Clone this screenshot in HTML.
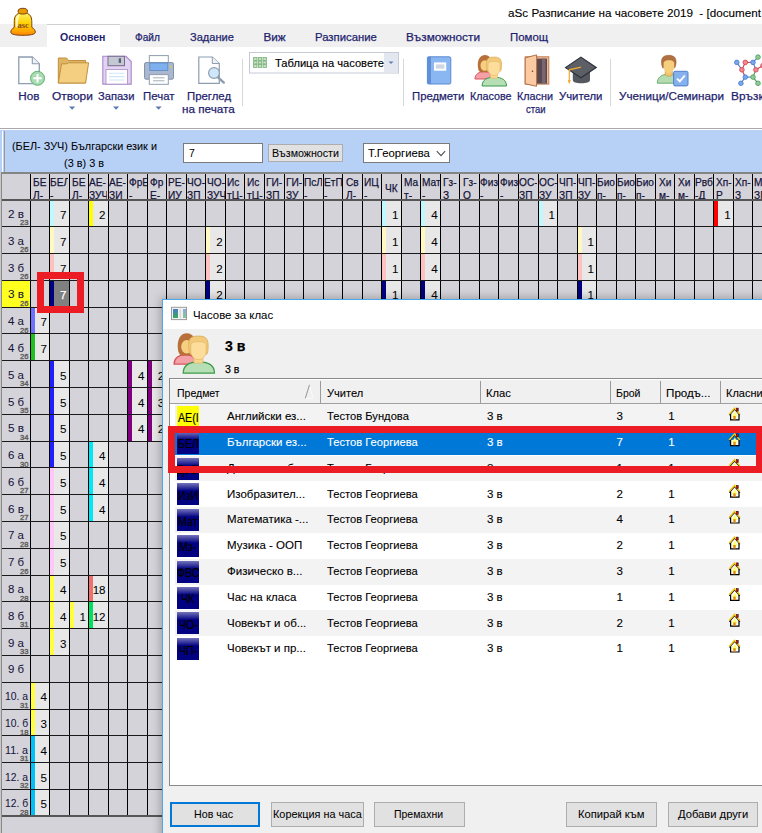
<!DOCTYPE html>
<html><head><meta charset="utf-8"><title>aSc</title>
<style>
html,body{margin:0;padding:0;width:762px;height:833px;overflow:hidden;background:#fff;position:relative}
.t{position:absolute;white-space:nowrap;font-family:"Liberation Sans",sans-serif;-webkit-text-stroke:0.25px currentColor}
.b{position:absolute}
</style></head><body>
<div class="t" style="left:508.00px;top:7.35px;font-size:11.70px;line-height:11.70px;color:#000;-webkit-text-stroke:0.1px #000;">aSc Разписание на часовете 2019&nbsp; - [document</div><div class="b" style="left:0;top:24px;width:762px;height:22.5px;background:#f0f0f0"></div><div class="b" style="left:46.5px;top:24px;width:73px;height:23px;background:#fff;border-top:1px solid #d0d0d0;box-sizing:border-box"></div><div class="t" style="left:60.00px;top:30.65px;font-size:11.70px;line-height:11.70px;color:#1f1f6e;font-weight:bold;transform:scaleX(0.9028);transform-origin:0 0;-webkit-text-stroke:0;">Основен</div><div class="t" style="left:135.00px;top:30.65px;font-size:11.70px;line-height:11.70px;color:#1f1f6e;transform:scaleX(0.8681);transform-origin:0 0;">Файл</div><div class="t" style="left:190.00px;top:30.65px;font-size:11.70px;line-height:11.70px;color:#1f1f6e;transform:scaleX(0.9483);transform-origin:0 0;">Задание</div><div class="t" style="left:263.50px;top:30.65px;font-size:11.70px;line-height:11.70px;color:#1f1f6e;">Виж</div><div class="t" style="left:315.00px;top:30.65px;font-size:11.70px;line-height:11.70px;color:#1f1f6e;transform:scaleX(0.9703);transform-origin:0 0;">Разписание</div><div class="t" style="left:406.00px;top:30.65px;font-size:11.70px;line-height:11.70px;color:#1f1f6e;transform:scaleX(1.0082);transform-origin:0 0;">Възможности</div><div class="t" style="left:509.60px;top:30.65px;font-size:11.70px;line-height:11.70px;color:#1f1f6e;transform:scaleX(0.9770);transform-origin:0 0;">Помощ</div><div class="b" style="left:0;top:128px;width:762px;height:1px;background:#a8a8a8"></div><div class="t" style="left:18.30px;top:90.05px;font-size:11.70px;line-height:11.70px;color:#1f1f6e;">Нов</div><div class="t" style="left:52.00px;top:90.05px;font-size:11.70px;line-height:11.70px;color:#1f1f6e;transform:scaleX(1.0200);transform-origin:0 0;">Отвори</div><div class="t" style="left:98.30px;top:90.05px;font-size:11.70px;line-height:11.70px;color:#1f1f6e;transform:scaleX(0.9555);transform-origin:0 0;">Запази</div><div class="t" style="left:143.30px;top:90.05px;font-size:11.70px;line-height:11.70px;color:#1f1f6e;transform:scaleX(0.9783);transform-origin:0 0;">Печат</div><div class="t" style="left:187.40px;top:90.05px;font-size:11.70px;line-height:11.70px;color:#1f1f6e;transform:scaleX(0.9735);transform-origin:0 0;">Преглед</div><div class="t" style="left:182.00px;top:102.65px;font-size:11.70px;line-height:11.70px;color:#1f1f6e;">на печата</div><div class="t" style="left:412.40px;top:90.05px;font-size:11.70px;line-height:11.70px;color:#1f1f6e;transform:scaleX(0.9685);transform-origin:0 0;">Предмети</div><div class="t" style="left:470.00px;top:90.05px;font-size:11.70px;line-height:11.70px;color:#1f1f6e;transform:scaleX(0.9204);transform-origin:0 0;">Класове</div><div class="t" style="left:517.00px;top:90.05px;font-size:11.70px;line-height:11.70px;color:#1f1f6e;transform:scaleX(0.9231);transform-origin:0 0;">Класни</div><div class="t" style="left:525.50px;top:102.65px;font-size:11.70px;line-height:11.70px;color:#1f1f6e;transform:scaleX(0.8091);transform-origin:0 0;">стаи</div><div class="t" style="left:559.00px;top:90.05px;font-size:11.70px;line-height:11.70px;color:#1f1f6e;transform:scaleX(0.9710);transform-origin:0 0;">Учители</div><div class="t" style="left:619.00px;top:90.05px;font-size:11.70px;line-height:11.70px;color:#1f1f6e;">Ученици/Семинари</div><div class="t" style="left:730.80px;top:90.05px;font-size:11.70px;line-height:11.70px;color:#1f1f6e;transform:scaleX(1.0155);transform-origin:0 0;">Връзки</div><svg class="b" style="left:0px;top:0px" width="50" height="45" viewBox="0 0 50 45"><defs><linearGradient id="bg1" x1="0" y1="0" x2="0" y2="1"><stop offset="0" stop-color="#fff060"/><stop offset="0.5" stop-color="#ffd000"/><stop offset="0.8" stop-color="#ffa800"/><stop offset="1" stop-color="#ff8800"/></linearGradient></defs>
<path d="M14.3 27.3 C14.3 21 14 18.5 15.5 16 C17 13.6 19.5 12.6 23 12.6 C26.5 12.6 29 13.6 30.5 16 C32 18.5 31.8 21 31.8 27.3 C33.8 28.6 35.3 30.2 35.3 32.2 C35.3 34.4 30 35.3 23 35.3 C16 35.3 10.8 34.4 10.8 32.2 C10.8 30.2 12.3 28.6 14.3 27.3 Z" fill="url(#bg1)" stroke="#7a4010" stroke-width="1"/>
<path d="M13 31 C15 33.6 31 33.6 33.5 31 C32.5 34.3 13.5 34.6 13 31Z" fill="#ff8a00" opacity="0.8"/>
<path d="M16.3 17 C17.2 15.2 18.6 14.5 19.8 14.4 C18.2 17.5 17.8 22 17.6 27 L15.8 27.6 C15.8 22 15.8 19 16.3 17Z" fill="#fffbe0" opacity="0.85"/>
<ellipse cx="22.8" cy="11.2" rx="4.7" ry="2.9" fill="#e89c00" stroke="#7a4010" stroke-width="1"/>
<text x="23.2" y="27.6" font-family="Liberation Serif" font-size="7.5" font-weight="bold" fill="#8a5020" text-anchor="middle" textLength="11.5" lengthAdjust="spacingAndGlyphs">asc</text></svg><svg class="b" style="left:0;top:0" width="762" height="130"><path d="M18.8 57 H32.3 L39.3 63.8 V83.6 H18.8 Z" fill="#fff" stroke="#8e9db0" stroke-width="1.3"/>
<path d="M32.3 57 V63.8 H39.3" fill="#eef1f5" stroke="#8e9db0" stroke-width="1.1"/>
<circle cx="37.5" cy="78.3" r="7" fill="#a9dbb0" stroke="#5fb070" stroke-width="1"/>
<path d="M37.5 74 V82.6 M33.2 78.3 H41.8" stroke="#fff" stroke-width="2"/><path d="M58.3 83 V58 H66.5 L68.5 60.5 H85.6 V83 Z" fill="#dfb565" stroke="#c0903e" stroke-width="1"/>
<path d="M58.3 83 L61.5 63.8 H67 L68.2 62.8 H88.6 L85.6 83 Z" fill="#f4cf82" stroke="#c0903e" stroke-width="1"/><path d="M102.8 56.3 H126 L131.2 61.5 V84.1 H102.8 Z" fill="#e2d3f3" stroke="#a88bc8" stroke-width="1.1"/>
<rect x="108" y="56.3" width="16.5" height="9.4" fill="#c3c8d3" stroke="#7a6a90" stroke-width="1"/>
<rect x="118.7" y="58.3" width="2.3" height="4.6" fill="#5a6070"/>
<rect x="106" y="69.4" width="21.5" height="14.7" fill="#fff" stroke="#a88bc8" stroke-width="0.8"/>
<path d="M109 73.2 H124.5 M109 76.6 H124.5 M109 80 H124.5" stroke="#cfe6fa" stroke-width="1.1"/><rect x="149.3" y="55.6" width="19" height="7.5" fill="#fff" stroke="#8e9db0" stroke-width="1"/>
<rect x="144.5" y="62.6" width="29" height="16.6" rx="1.5" fill="#a9b8cf" stroke="#8593aa" stroke-width="1"/>
<rect x="149.8" y="63" width="18" height="7.4" fill="#7fb0ee" stroke="#5a88c8" stroke-width="0.8"/>
<circle cx="170.6" cy="66.8" r="0.9" fill="#f5d020"/>
<rect x="149.3" y="74.6" width="19" height="9.7" fill="#fff" stroke="#8e9db0" stroke-width="1"/>
<path d="M153 77.8 H164.5 M153 80.8 H164.5" stroke="#9aa4b4" stroke-width="0.9"/><path d="M198.8 57 H212.3 L219.3 63.5 V83.4 H198.8 Z" fill="#fff" stroke="#8e9db0" stroke-width="1.2"/>
<path d="M212.3 57 V63.5 H219.3" fill="#eef1f5" stroke="#8e9db0" stroke-width="1"/>
<path d="M217.5 76.8 L223.8 82.6" stroke="#8e9db0" stroke-width="2.4" stroke-linecap="round"/>
<circle cx="214" cy="73" r="5.4" fill="#cfe7fb" stroke="#8e9db0" stroke-width="1.2"/><rect x="427.4" y="56.8" width="23.4" height="27.2" rx="1.5" fill="#8ab6f2" stroke="#5a8ad2" stroke-width="1"/>
<rect x="427.4" y="56.8" width="3.6" height="27.2" fill="#5f8fd6"/>
<rect x="434" y="62.4" width="12.2" height="8.3" fill="#fff"/>
<rect x="435.8" y="64.4" width="8.6" height="4.3" fill="#cdd6e2"/><g transform="translate(474.5 54.7) scale(1.0)">
<path d="M0.5 24.3 C0.5 19 5 17 9.5 17 C14 17 18 19 18 24.3 Z" fill="#f3a0a6" stroke="#d8525c" stroke-width="1"/>
<path d="M3.5 13 C2.5 5 5.5 0.2 10.5 0.2 C15 0.2 17.5 4 17 12 C17 15 15 17 12 17.5 L6 17.5 C4.5 16.5 3.7 15 3.5 13Z" fill="#b8703a"/>
<ellipse cx="10.3" cy="10.8" rx="4.3" ry="5.3" fill="#f7cf80"/>
<path d="M7.6 31.3 C7.6 25.3 12.3 22.5 19.8 22.5 C27.3 22.5 32 25.3 32 31.3 Z" fill="#b6dfb6" stroke="#3a9a48" stroke-width="1"/>
<rect x="16" y="17.5" width="7" height="6" fill="#f8d690" stroke="#e0b460" stroke-width="0.5"/>
<path d="M12 12 C11 3.5 14.5 2.4 19.5 2.4 C25 2.4 27.5 4 27 12 C27 14 26.5 15.5 26 16.5 L13 16.5 C12.4 15 12 13.5 12 12Z" fill="#f2ca7c" stroke="#dcae5a" stroke-width="0.7"/>
<path d="M13.5 10.5 C13.5 7.5 15 6.8 19.5 6.8 C24 6.8 25.5 7.5 25.5 10.5 L25.5 15 C25 18.5 22.5 20.8 19.5 20.8 C16.5 20.8 14 18.5 13.5 15Z" fill="#fcdd9c" stroke="#e0b460" stroke-width="0.5"/>
</g><rect x="525.2" y="56.8" width="23.6" height="27.3" fill="#f3bc90" stroke="#c07a50" stroke-width="1"/>
<rect x="536.8" y="58.6" width="10.2" height="25" fill="#5a4850"/>
<rect x="542" y="58.6" width="3.5" height="25" fill="#7a6670"/>
<path d="M525.2 57.8 L536.6 54.9 V86.3 L525.2 83.8 Z" fill="#fbc9a2" stroke="#b07048" stroke-width="1"/>
<circle cx="532.5" cy="71.3" r="0.8" fill="#6a4030"/><path d="M572.8 71 V80 C572.8 82.5 576 83.2 581.3 83.2 C586.5 83.2 590 82.5 590 80 V71 Z" fill="#55595f"/>
<path d="M565.4 67.6 L580.9 57.1 L596.3 67.5 L580.9 77.8 Z" fill="#5c6066" stroke="#2a2f3a" stroke-width="1.1"/>
<path d="M580.9 67.2 L569.3 69.8 V82.5" stroke="#f0a830" stroke-width="1.2" fill="none"/>
<path d="M567.8 80 L569.3 84.3 L570.8 80 Z" fill="#f0a830"/><path d="M657.3 83.2 C657.3 77.5 661.5 74.2 668.5 74.2 C675.5 74.2 680 77.5 680 83.2 Z" fill="#b4dcb0" stroke="#60a868" stroke-width="0.9"/>
<path d="M665.2 70.5 V75.2 C666.5 76.4 670.8 76.4 672.3 75.2 V70.5 Z" fill="#f2c56e" stroke="#c89848" stroke-width="0.7"/>
<path d="M661.6 64 C660.8 58 663.5 55.3 668.6 55.3 C673.6 55.3 676.8 57.5 676 63.5 C675.8 65.5 675.2 67 674.5 68 L662.8 68 C662.2 67 661.8 65.5 661.6 64Z" fill="#b07040" stroke="#98582c" stroke-width="0.5"/>
<path d="M663.6 62.8 C664.5 60.6 666.5 60.3 668.8 60.3 C671.5 60.3 673.4 60.8 674.2 62.8 L674.2 67.5 C673.6 71 671.3 73.2 668.9 73.2 C666.4 73.2 664.2 71 663.6 67.5Z" fill="#f6cf7e"/>
<rect x="673.6" y="71.3" width="14.4" height="14.6" rx="1.5" fill="#85b2ee" stroke="#4f80c8" stroke-width="1"/>
<path d="M677 78.6 L679.8 81.3 L684.8 75.5" stroke="#fff" stroke-width="1.9" fill="none"/><line x1="736.8" y1="62.4" x2="741.9" y2="69.8" stroke="#4a7ad0" stroke-width="1.1"/><line x1="745.3" y1="62.4" x2="741.9" y2="69.8" stroke="#d04050" stroke-width="1.1"/><line x1="745.3" y1="62.4" x2="753" y2="62.4" stroke="#d04050" stroke-width="1.1"/><line x1="753" y1="62.4" x2="758" y2="57.1" stroke="#4a7ad0" stroke-width="1.1"/><line x1="753" y1="62.4" x2="755.9" y2="69.8" stroke="#4a7ad0" stroke-width="1.1"/><line x1="755.9" y1="69.8" x2="763" y2="65.6" stroke="#d04050" stroke-width="1.1"/><line x1="741.9" y1="69.8" x2="745.3" y2="77.1" stroke="#d04050" stroke-width="1.1"/><line x1="745.3" y1="77.1" x2="753" y2="77.1" stroke="#4a7ad0" stroke-width="1.1"/><line x1="753" y1="77.1" x2="755.9" y2="69.8" stroke="#4a9a58" stroke-width="1.1"/><line x1="745.3" y1="77.1" x2="740.9" y2="83.3" stroke="#4a7ad0" stroke-width="1.1"/><line x1="753" y1="77.1" x2="758" y2="83.3" stroke="#4a9a58" stroke-width="1.1"/><circle cx="736.8" cy="62.4" r="2.3" fill="#7aa6ea" stroke="#4a7ad0" stroke-width="0.8"/><circle cx="745.3" cy="62.4" r="2.3" fill="#f08890" stroke="#d04050" stroke-width="0.8"/><circle cx="753" cy="62.4" r="2.3" fill="#7aa6ea" stroke="#4a7ad0" stroke-width="0.8"/><circle cx="758" cy="57.1" r="2.3" fill="#90cc98" stroke="#4a9a58" stroke-width="0.8"/><circle cx="741.9" cy="69.8" r="2.3" fill="#f08890" stroke="#d04050" stroke-width="0.8"/><circle cx="755.9" cy="69.8" r="2.3" fill="#f08890" stroke="#d04050" stroke-width="0.8"/><circle cx="763" cy="65.6" r="2.3" fill="#f08890" stroke="#d04050" stroke-width="0.8"/><circle cx="745.3" cy="77.1" r="2.3" fill="#7aa6ea" stroke="#4a7ad0" stroke-width="0.8"/><circle cx="753" cy="77.1" r="2.3" fill="#90cc98" stroke="#4a9a58" stroke-width="0.8"/><circle cx="740.9" cy="83.3" r="2.3" fill="#7aa6ea" stroke="#4a7ad0" stroke-width="0.8"/><circle cx="758" cy="83.3" r="2.3" fill="#90cc98" stroke="#4a9a58" stroke-width="0.8"/><path d="M69 106.6 L75.2 106.6 L72.1 109.8Z M113 106.6 L119.2 106.6 L116.1 109.8Z M155.5 106.6 L161.7 106.6 L158.6 109.8Z" fill="#5a7ab0"/><rect x="242" y="58.7" width="1" height="47.5" fill="#d8d8d8"/><rect x="403" y="58.7" width="1" height="47.5" fill="#d8d8d8"/><rect x="610" y="58.7" width="1" height="47.5" fill="#d8d8d8"/><rect x="249.5" y="52.5" width="149" height="20.5" fill="#fff" stroke="#c5cad6" stroke-width="1"/><rect x="384" y="53" width="14" height="19.5" fill="#e3e7f0"/><path d="M388.5 61.5 L393.5 61.5 L391 64Z" fill="#6080b0"/><rect x="253.6" y="57.5" width="3.4" height="2.9" fill="#c4e0c4" stroke="#78b078" stroke-width="0.8"/><rect x="253.6" y="61.0" width="3.4" height="2.9" fill="#c4e0c4" stroke="#78b078" stroke-width="0.8"/><rect x="253.6" y="64.5" width="3.4" height="2.9" fill="#c4e0c4" stroke="#78b078" stroke-width="0.8"/><rect x="258.3" y="57.5" width="3.4" height="2.9" fill="#c4e0c4" stroke="#78b078" stroke-width="0.8"/><rect x="258.3" y="61.0" width="3.4" height="2.9" fill="#c4e0c4" stroke="#78b078" stroke-width="0.8"/><rect x="258.3" y="64.5" width="3.4" height="2.9" fill="#c4e0c4" stroke="#78b078" stroke-width="0.8"/><rect x="263.0" y="57.5" width="3.4" height="2.9" fill="#c4e0c4" stroke="#78b078" stroke-width="0.8"/><rect x="263.0" y="61.0" width="3.4" height="2.9" fill="#c4e0c4" stroke="#78b078" stroke-width="0.8"/><rect x="263.0" y="64.5" width="3.4" height="2.9" fill="#c4e0c4" stroke="#78b078" stroke-width="0.8"/></svg><div class="t" style="left:274.50px;top:58.04px;font-size:11.80px;line-height:11.80px;color:#000;transform:scaleX(0.9445);transform-origin:0 0;-webkit-text-stroke:0.15px #000;">Таблица на часовете</div><div class="b" style="left:0;top:130px;width:762px;height:42px;background:#b7d0f6"></div><div class="b" style="left:2px;top:131px;width:1px;height:41px;background:#fff"></div><div class="b" style="left:4px;top:131px;width:1px;height:41px;background:#9a9a9a"></div><div class="t" style="left:12.00px;top:140.06px;font-size:11.60px;line-height:11.60px;color:#000;transform:scaleX(0.9367);transform-origin:0 0;-webkit-text-stroke:0.05px #000;">(БЕЛ- ЗУЧ) Български език и</div><div class="t" style="left:64.00px;top:156.56px;font-size:11.60px;line-height:11.60px;color:#000;transform:scaleX(0.9390);transform-origin:0 0;-webkit-text-stroke:0.05px #000;">(3 в) 3 в</div><div class="b" style="left:183px;top:143px;width:80px;height:20px;background:#fff;border:1px solid #7a7a7a;box-sizing:border-box"></div><div class="t" style="left:189.20px;top:147.46px;font-size:11.60px;line-height:11.60px;color:#000;transform:scaleX(0.8923);transform-origin:0 0;-webkit-text-stroke:0.05px #000;">7</div><div class="b" style="left:268px;top:144px;width:75px;height:17.5px;background:#e1e1e1;border:1px solid #adadad;box-sizing:border-box"></div><div class="t" style="left:272.00px;top:147.97px;font-size:11.40px;line-height:11.40px;color:#000;transform:scaleX(0.9358);transform-origin:0 0;-webkit-text-stroke:0.05px #000;">Възможности</div><div class="b" style="left:363px;top:143px;width:87px;height:20px;background:#fff;border:1px solid #7a7a7a;box-sizing:border-box"></div><div class="t" style="left:368.00px;top:147.46px;font-size:11.60px;line-height:11.60px;color:#000;transform:scaleX(0.9748);transform-origin:0 0;-webkit-text-stroke:0.05px #000;">Т.Георгиева</div><svg class="b" style="left:430px;top:145px" width="20" height="16"><path d="M6.8 6.2 L11 10.7 L15.1 6.2" fill="none" stroke="#505050" stroke-width="1.1"/></svg><svg class="b" style="left:0;top:0" width="762" height="833" shape-rendering="crispEdges"><rect x="0" y="172" width="762" height="661" fill="#d4d3d9"/><rect x="0" y="172" width="762" height="2" fill="#858585"/><rect x="1" y="172" width="1" height="661" fill="#8a8a8a"/><rect x="0" y="172" width="1" height="661" fill="#c8c8c8"/><rect x="2" y="281" width="28" height="26" fill="#ffff20"/><rect x="50" y="200" width="19" height="26" fill="#e8e8e8"/><rect x="50" y="200" width="4" height="26" fill="#c0f8ff"/><rect x="50" y="227" width="19" height="26" fill="#e8e8e8"/><rect x="50" y="227" width="4" height="26" fill="#fff8c0"/><rect x="50" y="254" width="19" height="26" fill="#e8e8e8"/><rect x="50" y="254" width="4" height="26" fill="#ffc0c0"/><rect x="89" y="200" width="19" height="26" fill="#e8e8e8"/><rect x="89" y="200" width="4" height="26" fill="#ffff00"/><rect x="382" y="200" width="19" height="26" fill="#e8e8e8"/><rect x="382" y="200" width="4" height="26" fill="#c0f8ff"/><rect x="421" y="200" width="19" height="26" fill="#e8e8e8"/><rect x="421" y="200" width="4" height="26" fill="#c0f8ff"/><rect x="539" y="200" width="18" height="26" fill="#e8e8e8"/><rect x="539" y="200" width="4" height="26" fill="#c0f8ff"/><rect x="714" y="200" width="19" height="26" fill="#e8e8e8"/><rect x="714" y="200" width="4" height="26" fill="#ff0000"/><rect x="206" y="227" width="19" height="26" fill="#e8e8e8"/><rect x="206" y="227" width="4" height="26" fill="#fff8c0"/><rect x="382" y="227" width="19" height="26" fill="#e8e8e8"/><rect x="382" y="227" width="4" height="26" fill="#fff8c0"/><rect x="421" y="227" width="19" height="26" fill="#e8e8e8"/><rect x="421" y="227" width="4" height="26" fill="#fff8c0"/><rect x="578" y="227" width="18" height="26" fill="#e8e8e8"/><rect x="578" y="227" width="4" height="26" fill="#fff8c0"/><rect x="206" y="254" width="19" height="26" fill="#e8e8e8"/><rect x="206" y="254" width="4" height="26" fill="#ffc0c0"/><rect x="382" y="254" width="19" height="26" fill="#e8e8e8"/><rect x="382" y="254" width="4" height="26" fill="#ffc0c0"/><rect x="421" y="254" width="19" height="26" fill="#e8e8e8"/><rect x="421" y="254" width="4" height="26" fill="#ffc0c0"/><rect x="578" y="254" width="18" height="26" fill="#e8e8e8"/><rect x="578" y="254" width="4" height="26" fill="#ffc0c0"/><rect x="206" y="281" width="19" height="26" fill="#e8e8e8"/><rect x="206" y="281" width="4" height="26" fill="#000080"/><rect x="382" y="281" width="19" height="26" fill="#e8e8e8"/><rect x="382" y="281" width="4" height="26" fill="#000080"/><rect x="421" y="281" width="19" height="26" fill="#e8e8e8"/><rect x="421" y="281" width="4" height="26" fill="#000080"/><rect x="578" y="281" width="18" height="26" fill="#e8e8e8"/><rect x="578" y="281" width="4" height="26" fill="#000080"/><rect x="31" y="308" width="18" height="25" fill="#e8e8e8"/><rect x="31" y="308" width="4" height="25" fill="#7070ff"/><rect x="31" y="334" width="18" height="26" fill="#e8e8e8"/><rect x="31" y="334" width="4" height="26" fill="#20c020"/><rect x="50" y="361" width="19" height="26" fill="#e8e8e8"/><rect x="50" y="361" width="4" height="26" fill="#2020ff"/><rect x="50" y="388" width="19" height="26" fill="#e8e8e8"/><rect x="50" y="388" width="4" height="26" fill="#2020ff"/><rect x="50" y="415" width="19" height="26" fill="#e8e8e8"/><rect x="50" y="415" width="4" height="26" fill="#2020ff"/><rect x="50" y="442" width="19" height="25" fill="#e8e8e8"/><rect x="50" y="442" width="4" height="25" fill="#2020ff"/><rect x="128" y="361" width="19" height="26" fill="#e8e8e8"/><rect x="128" y="361" width="4" height="26" fill="#800080"/><rect x="128" y="388" width="19" height="26" fill="#e8e8e8"/><rect x="128" y="388" width="4" height="26" fill="#800080"/><rect x="128" y="415" width="19" height="26" fill="#e8e8e8"/><rect x="128" y="415" width="4" height="26" fill="#800080"/><rect x="148" y="361" width="18" height="26" fill="#e8e8e8"/><rect x="148" y="361" width="4" height="26" fill="#800080"/><rect x="148" y="388" width="18" height="26" fill="#e8e8e8"/><rect x="148" y="388" width="4" height="26" fill="#800080"/><rect x="148" y="415" width="18" height="26" fill="#e8e8e8"/><rect x="148" y="415" width="4" height="26" fill="#800080"/><rect x="89" y="442" width="19" height="25" fill="#e8e8e8"/><rect x="89" y="442" width="4" height="25" fill="#00e8f8"/><rect x="89" y="468" width="19" height="26" fill="#e8e8e8"/><rect x="89" y="468" width="4" height="26" fill="#00e8f8"/><rect x="89" y="495" width="19" height="26" fill="#e8e8e8"/><rect x="89" y="495" width="4" height="26" fill="#00e8f8"/><rect x="50" y="468" width="19" height="26" fill="#e8e8e8"/><rect x="50" y="468" width="4" height="26" fill="#ffc8f8"/><rect x="50" y="495" width="19" height="26" fill="#e8e8e8"/><rect x="50" y="495" width="4" height="26" fill="#ffc8f8"/><rect x="50" y="522" width="19" height="26" fill="#e8e8e8"/><rect x="50" y="522" width="4" height="26" fill="#ffc8f8"/><rect x="50" y="549" width="19" height="26" fill="#e8e8e8"/><rect x="50" y="549" width="4" height="26" fill="#ffc8f8"/><rect x="50" y="576" width="19" height="25" fill="#e8e8e8"/><rect x="50" y="576" width="4" height="25" fill="#ffff40"/><rect x="50" y="602" width="19" height="26" fill="#e8e8e8"/><rect x="50" y="602" width="4" height="26" fill="#ffff40"/><rect x="50" y="629" width="19" height="26" fill="#e8e8e8"/><rect x="50" y="629" width="4" height="26" fill="#ffff40"/><rect x="70" y="602" width="18" height="26" fill="#e8e8e8"/><rect x="70" y="602" width="4" height="26" fill="#ffff40"/><rect x="89" y="576" width="19" height="25" fill="#e8e8e8"/><rect x="89" y="576" width="4" height="25" fill="#f07070"/><rect x="89" y="602" width="19" height="26" fill="#e8e8e8"/><rect x="89" y="602" width="4" height="26" fill="#00e060"/><rect x="31" y="683" width="18" height="26" fill="#e8e8e8"/><rect x="31" y="683" width="4" height="26" fill="#ffff40"/><rect x="31" y="710" width="18" height="25" fill="#e8e8e8"/><rect x="31" y="710" width="4" height="25" fill="#ffff40"/><rect x="31" y="736" width="18" height="26" fill="#e8e8e8"/><rect x="31" y="736" width="4" height="26" fill="#00c0f8"/><rect x="31" y="763" width="18" height="26" fill="#e8e8e8"/><rect x="31" y="763" width="4" height="26" fill="#00c0f8"/><rect x="31" y="790" width="18" height="26" fill="#e8e8e8"/><rect x="31" y="790" width="4" height="26" fill="#00c0f8"/><rect x="50" y="281" width="19" height="26" fill="#808080"/><rect x="50" y="281" width="4" height="26" fill="#000080"/><rect x="30" y="174" width="1" height="641" fill="#000"/><rect x="49" y="174" width="1" height="641" fill="#000"/><rect x="69" y="174" width="1" height="641" fill="#000"/><rect x="88" y="174" width="1" height="641" fill="#000"/><rect x="108" y="174" width="1" height="641" fill="#000"/><rect x="127" y="174" width="1" height="641" fill="#000"/><rect x="147" y="174" width="1" height="641" fill="#000"/><rect x="166" y="174" width="1" height="641" fill="#000"/><rect x="186" y="174" width="1" height="641" fill="#000"/><rect x="205" y="174" width="1" height="641" fill="#000"/><rect x="225" y="174" width="1" height="641" fill="#000"/><rect x="244" y="174" width="1" height="641" fill="#000"/><rect x="264" y="174" width="1" height="641" fill="#000"/><rect x="284" y="174" width="1" height="641" fill="#000"/><rect x="303" y="174" width="1" height="641" fill="#000"/><rect x="323" y="174" width="1" height="641" fill="#000"/><rect x="342" y="174" width="1" height="641" fill="#000"/><rect x="362" y="174" width="1" height="641" fill="#000"/><rect x="381" y="174" width="1" height="641" fill="#000"/><rect x="401" y="174" width="1" height="641" fill="#000"/><rect x="420" y="174" width="1" height="641" fill="#000"/><rect x="440" y="174" width="1" height="641" fill="#000"/><rect x="459" y="174" width="1" height="641" fill="#000"/><rect x="479" y="174" width="1" height="641" fill="#000"/><rect x="498" y="174" width="1" height="641" fill="#000"/><rect x="518" y="174" width="1" height="641" fill="#000"/><rect x="538" y="174" width="1" height="641" fill="#000"/><rect x="557" y="174" width="1" height="641" fill="#000"/><rect x="577" y="174" width="1" height="641" fill="#000"/><rect x="596" y="174" width="1" height="641" fill="#000"/><rect x="616" y="174" width="1" height="641" fill="#000"/><rect x="635" y="174" width="1" height="641" fill="#000"/><rect x="655" y="174" width="1" height="641" fill="#000"/><rect x="674" y="174" width="1" height="641" fill="#000"/><rect x="694" y="174" width="1" height="641" fill="#000"/><rect x="713" y="174" width="1" height="641" fill="#000"/><rect x="733" y="174" width="1" height="641" fill="#000"/><rect x="752" y="174" width="1" height="641" fill="#000"/><rect x="772" y="174" width="1" height="641" fill="#000"/><rect x="2" y="199" width="760" height="2" fill="#555"/><rect x="2" y="226" width="760" height="1" fill="#1a1a1a"/><rect x="2" y="253" width="760" height="1" fill="#1a1a1a"/><rect x="2" y="280" width="760" height="1" fill="#1a1a1a"/><rect x="2" y="307" width="760" height="1" fill="#1a1a1a"/><rect x="2" y="333" width="760" height="1" fill="#1a1a1a"/><rect x="2" y="360" width="760" height="1" fill="#1a1a1a"/><rect x="2" y="387" width="760" height="1" fill="#1a1a1a"/><rect x="2" y="414" width="760" height="1" fill="#1a1a1a"/><rect x="2" y="441" width="760" height="1" fill="#1a1a1a"/><rect x="2" y="467" width="760" height="1" fill="#1a1a1a"/><rect x="2" y="494" width="760" height="1" fill="#1a1a1a"/><rect x="2" y="521" width="760" height="1" fill="#1a1a1a"/><rect x="2" y="548" width="760" height="1" fill="#1a1a1a"/><rect x="2" y="575" width="760" height="1" fill="#1a1a1a"/><rect x="2" y="601" width="760" height="1" fill="#1a1a1a"/><rect x="2" y="628" width="760" height="1" fill="#1a1a1a"/><rect x="2" y="655" width="760" height="1" fill="#1a1a1a"/><rect x="2" y="682" width="760" height="1" fill="#1a1a1a"/><rect x="2" y="709" width="760" height="1" fill="#1a1a1a"/><rect x="2" y="735" width="760" height="1" fill="#1a1a1a"/><rect x="2" y="762" width="760" height="1" fill="#1a1a1a"/><rect x="2" y="789" width="760" height="1" fill="#1a1a1a"/><rect x="2" y="815" width="760" height="2" fill="#555"/></svg><div class="t" style="left:59.96px;top:208.95px;font-size:11.60px;line-height:11.60px;color:#000;-webkit-text-stroke:0.05px #000;">7</div><div class="t" style="left:59.96px;top:235.74px;font-size:11.60px;line-height:11.60px;color:#000;-webkit-text-stroke:0.05px #000;">7</div><div class="t" style="left:59.96px;top:262.54px;font-size:11.60px;line-height:11.60px;color:#000;-webkit-text-stroke:0.05px #000;">7</div><div class="t" style="left:99.03px;top:208.95px;font-size:11.60px;line-height:11.60px;color:#000;-webkit-text-stroke:0.05px #000;">2</div><div class="t" style="left:392.10px;top:208.95px;font-size:11.60px;line-height:11.60px;color:#000;-webkit-text-stroke:0.05px #000;">1</div><div class="t" style="left:431.18px;top:208.95px;font-size:11.60px;line-height:11.60px;color:#000;-webkit-text-stroke:0.05px #000;">4</div><div class="t" style="left:548.41px;top:208.95px;font-size:11.60px;line-height:11.60px;color:#000;-webkit-text-stroke:0.05px #000;">1</div><div class="t" style="left:724.25px;top:208.95px;font-size:11.60px;line-height:11.60px;color:#000;-webkit-text-stroke:0.05px #000;">1</div><div class="t" style="left:216.26px;top:235.74px;font-size:11.60px;line-height:11.60px;color:#000;-webkit-text-stroke:0.05px #000;">2</div><div class="t" style="left:392.10px;top:235.74px;font-size:11.60px;line-height:11.60px;color:#000;-webkit-text-stroke:0.05px #000;">1</div><div class="t" style="left:431.18px;top:235.74px;font-size:11.60px;line-height:11.60px;color:#000;-webkit-text-stroke:0.05px #000;">4</div><div class="t" style="left:587.48px;top:235.74px;font-size:11.60px;line-height:11.60px;color:#000;-webkit-text-stroke:0.05px #000;">1</div><div class="t" style="left:216.26px;top:262.54px;font-size:11.60px;line-height:11.60px;color:#000;-webkit-text-stroke:0.05px #000;">2</div><div class="t" style="left:392.10px;top:262.54px;font-size:11.60px;line-height:11.60px;color:#000;-webkit-text-stroke:0.05px #000;">1</div><div class="t" style="left:431.18px;top:262.54px;font-size:11.60px;line-height:11.60px;color:#000;-webkit-text-stroke:0.05px #000;">4</div><div class="t" style="left:587.48px;top:262.54px;font-size:11.60px;line-height:11.60px;color:#000;-webkit-text-stroke:0.05px #000;">1</div><div class="t" style="left:216.26px;top:289.33px;font-size:11.60px;line-height:11.60px;color:#000;-webkit-text-stroke:0.05px #000;">2</div><div class="t" style="left:392.10px;top:289.33px;font-size:11.60px;line-height:11.60px;color:#000;-webkit-text-stroke:0.05px #000;">1</div><div class="t" style="left:431.18px;top:289.33px;font-size:11.60px;line-height:11.60px;color:#000;-webkit-text-stroke:0.05px #000;">4</div><div class="t" style="left:587.48px;top:289.33px;font-size:11.60px;line-height:11.60px;color:#000;-webkit-text-stroke:0.05px #000;">1</div><div class="t" style="left:40.42px;top:316.13px;font-size:11.60px;line-height:11.60px;color:#000;-webkit-text-stroke:0.05px #000;">7</div><div class="t" style="left:40.42px;top:342.92px;font-size:11.60px;line-height:11.60px;color:#000;-webkit-text-stroke:0.05px #000;">7</div><div class="t" style="left:59.96px;top:369.72px;font-size:11.60px;line-height:11.60px;color:#000;-webkit-text-stroke:0.05px #000;">5</div><div class="t" style="left:59.96px;top:396.51px;font-size:11.60px;line-height:11.60px;color:#000;-webkit-text-stroke:0.05px #000;">5</div><div class="t" style="left:59.96px;top:423.31px;font-size:11.60px;line-height:11.60px;color:#000;-webkit-text-stroke:0.05px #000;">5</div><div class="t" style="left:59.96px;top:450.10px;font-size:11.60px;line-height:11.60px;color:#000;-webkit-text-stroke:0.05px #000;">5</div><div class="t" style="left:138.11px;top:369.72px;font-size:11.60px;line-height:11.60px;color:#000;-webkit-text-stroke:0.05px #000;">4</div><div class="t" style="left:138.11px;top:396.51px;font-size:11.60px;line-height:11.60px;color:#000;-webkit-text-stroke:0.05px #000;">4</div><div class="t" style="left:138.11px;top:423.31px;font-size:11.60px;line-height:11.60px;color:#000;-webkit-text-stroke:0.05px #000;">4</div><div class="t" style="left:157.65px;top:369.72px;font-size:11.60px;line-height:11.60px;color:#000;-webkit-text-stroke:0.05px #000;">2</div><div class="t" style="left:157.65px;top:396.51px;font-size:11.60px;line-height:11.60px;color:#000;-webkit-text-stroke:0.05px #000;">3</div><div class="t" style="left:157.65px;top:423.31px;font-size:11.60px;line-height:11.60px;color:#000;-webkit-text-stroke:0.05px #000;">2</div><div class="t" style="left:99.03px;top:450.10px;font-size:11.60px;line-height:11.60px;color:#000;-webkit-text-stroke:0.05px #000;">4</div><div class="t" style="left:99.03px;top:476.90px;font-size:11.60px;line-height:11.60px;color:#000;-webkit-text-stroke:0.05px #000;">4</div><div class="t" style="left:99.03px;top:503.69px;font-size:11.60px;line-height:11.60px;color:#000;-webkit-text-stroke:0.05px #000;">4</div><div class="t" style="left:59.96px;top:476.90px;font-size:11.60px;line-height:11.60px;color:#000;-webkit-text-stroke:0.05px #000;">5</div><div class="t" style="left:59.96px;top:503.69px;font-size:11.60px;line-height:11.60px;color:#000;-webkit-text-stroke:0.05px #000;">5</div><div class="t" style="left:59.96px;top:530.49px;font-size:11.60px;line-height:11.60px;color:#000;-webkit-text-stroke:0.05px #000;">5</div><div class="t" style="left:59.96px;top:557.28px;font-size:11.60px;line-height:11.60px;color:#000;-webkit-text-stroke:0.05px #000;">5</div><div class="t" style="left:59.96px;top:584.08px;font-size:11.60px;line-height:11.60px;color:#000;-webkit-text-stroke:0.05px #000;">4</div><div class="t" style="left:59.96px;top:610.87px;font-size:11.60px;line-height:11.60px;color:#000;-webkit-text-stroke:0.05px #000;">4</div><div class="t" style="left:59.96px;top:637.67px;font-size:11.60px;line-height:11.60px;color:#000;-webkit-text-stroke:0.05px #000;">3</div><div class="t" style="left:79.49px;top:610.87px;font-size:11.60px;line-height:11.60px;color:#000;-webkit-text-stroke:0.05px #000;">1</div><div class="t" style="left:92.63px;top:584.08px;font-size:11.60px;line-height:11.60px;color:#000;-webkit-text-stroke:0.05px #000;">18</div><div class="t" style="left:92.63px;top:610.87px;font-size:11.60px;line-height:11.60px;color:#000;-webkit-text-stroke:0.05px #000;">12</div><div class="t" style="left:40.42px;top:691.26px;font-size:11.60px;line-height:11.60px;color:#000;-webkit-text-stroke:0.05px #000;">4</div><div class="t" style="left:40.42px;top:718.05px;font-size:11.60px;line-height:11.60px;color:#000;-webkit-text-stroke:0.05px #000;">3</div><div class="t" style="left:40.42px;top:744.85px;font-size:11.60px;line-height:11.60px;color:#000;-webkit-text-stroke:0.05px #000;">4</div><div class="t" style="left:40.42px;top:771.64px;font-size:11.60px;line-height:11.60px;color:#000;-webkit-text-stroke:0.05px #000;">5</div><div class="t" style="left:40.42px;top:798.44px;font-size:11.60px;line-height:11.60px;color:#000;-webkit-text-stroke:0.05px #000;">5</div><div class="t" style="left:59.96px;top:289.33px;font-size:11.60px;line-height:11.60px;color:#fff;">7</div><div class="b" style="left:30.63px;top:172px;width:18.24px;height:27px;overflow:hidden"><div class="t" style="left:2.41px;top:4.64px;font-size:11.80px;line-height:11.80px;color:#14143a;transform:scaleX(0.8600);transform-origin:0 0;">БЕ</div><div class="t" style="left:2.41px;top:17.54px;font-size:11.80px;line-height:11.80px;color:#14143a;transform:scaleX(0.8600);transform-origin:0 0;">Л-</div></div><div class="b" style="left:50.17px;top:172px;width:18.24px;height:27px;overflow:hidden"><div class="t" style="left:0.20px;top:4.64px;font-size:11.80px;line-height:11.80px;color:#14143a;transform:scaleX(0.8600);transform-origin:0 0;">БЕЛ</div><div class="t" style="left:0.20px;top:17.54px;font-size:11.80px;line-height:11.80px;color:#14143a;transform:scaleX(0.8600);transform-origin:0 0;">-</div></div><div class="b" style="left:69.71px;top:172px;width:18.24px;height:27px;overflow:hidden"><div class="t" style="left:2.41px;top:4.64px;font-size:11.80px;line-height:11.80px;color:#14143a;transform:scaleX(0.8600);transform-origin:0 0;">БЕ</div><div class="t" style="left:2.41px;top:17.54px;font-size:11.80px;line-height:11.80px;color:#14143a;transform:scaleX(0.8600);transform-origin:0 0;">Л-</div></div><div class="b" style="left:89.24px;top:172px;width:18.24px;height:27px;overflow:hidden"><div class="t" style="left:0.20px;top:4.64px;font-size:11.80px;line-height:11.80px;color:#14143a;transform:scaleX(0.8600);transform-origin:0 0;">АЕ-</div><div class="t" style="left:0.20px;top:17.54px;font-size:11.80px;line-height:11.80px;color:#14143a;transform:scaleX(0.8600);transform-origin:0 0;">ЗУЧ</div></div><div class="b" style="left:108.78px;top:172px;width:18.24px;height:27px;overflow:hidden"><div class="t" style="left:0.65px;top:4.64px;font-size:11.80px;line-height:11.80px;color:#14143a;transform:scaleX(0.8600);transform-origin:0 0;">АЕ-</div><div class="t" style="left:0.65px;top:17.54px;font-size:11.80px;line-height:11.80px;color:#14143a;transform:scaleX(0.8600);transform-origin:0 0;">ЗИ</div></div><div class="b" style="left:128.32px;top:172px;width:18.24px;height:27px;overflow:hidden"><div class="t" style="left:0.20px;top:4.64px;font-size:11.80px;line-height:11.80px;color:#14143a;transform:scaleX(0.8600);transform-origin:0 0;">ФрЕ</div><div class="t" style="left:0.20px;top:17.54px;font-size:11.80px;line-height:11.80px;color:#14143a;transform:scaleX(0.8600);transform-origin:0 0;">-</div></div><div class="b" style="left:147.86px;top:172px;width:18.24px;height:27px;overflow:hidden"><div class="t" style="left:2.45px;top:4.64px;font-size:11.80px;line-height:11.80px;color:#14143a;transform:scaleX(0.8600);transform-origin:0 0;">Фр</div><div class="t" style="left:2.45px;top:17.54px;font-size:11.80px;line-height:11.80px;color:#14143a;transform:scaleX(0.8600);transform-origin:0 0;">Е-</div></div><div class="b" style="left:167.40px;top:172px;width:18.24px;height:27px;overflow:hidden"><div class="t" style="left:0.65px;top:4.64px;font-size:11.80px;line-height:11.80px;color:#14143a;transform:scaleX(0.8600);transform-origin:0 0;">РЕ-</div><div class="t" style="left:0.65px;top:17.54px;font-size:11.80px;line-height:11.80px;color:#14143a;transform:scaleX(0.8600);transform-origin:0 0;">ИУ</div></div><div class="b" style="left:186.93px;top:172px;width:18.24px;height:27px;overflow:hidden"><div class="t" style="left:0.20px;top:4.64px;font-size:11.80px;line-height:11.80px;color:#14143a;transform:scaleX(0.8600);transform-origin:0 0;">ЧО-</div><div class="t" style="left:0.20px;top:17.54px;font-size:11.80px;line-height:11.80px;color:#14143a;transform:scaleX(0.8600);transform-origin:0 0;">ЗП</div></div><div class="b" style="left:206.47px;top:172px;width:18.24px;height:27px;overflow:hidden"><div class="t" style="left:0.20px;top:4.64px;font-size:11.80px;line-height:11.80px;color:#14143a;transform:scaleX(0.8600);transform-origin:0 0;">ЧО-</div><div class="t" style="left:0.20px;top:17.54px;font-size:11.80px;line-height:11.80px;color:#14143a;transform:scaleX(0.8600);transform-origin:0 0;">ЗУЧ</div></div><div class="b" style="left:226.01px;top:172px;width:18.24px;height:27px;overflow:hidden"><div class="t" style="left:1.34px;top:4.64px;font-size:11.80px;line-height:11.80px;color:#14143a;transform:scaleX(0.8600);transform-origin:0 0;">Ис</div><div class="t" style="left:1.34px;top:17.54px;font-size:11.80px;line-height:11.80px;color:#14143a;transform:scaleX(0.8600);transform-origin:0 0;">тЦ-</div></div><div class="b" style="left:245.55px;top:172px;width:18.24px;height:27px;overflow:hidden"><div class="t" style="left:1.34px;top:4.64px;font-size:11.80px;line-height:11.80px;color:#14143a;transform:scaleX(0.8600);transform-origin:0 0;">Ис</div><div class="t" style="left:1.34px;top:17.54px;font-size:11.80px;line-height:11.80px;color:#14143a;transform:scaleX(0.8600);transform-origin:0 0;">тЦ-</div></div><div class="b" style="left:265.09px;top:172px;width:18.24px;height:27px;overflow:hidden"><div class="t" style="left:1.04px;top:4.64px;font-size:11.80px;line-height:11.80px;color:#14143a;transform:scaleX(0.8600);transform-origin:0 0;">ГИ-</div><div class="t" style="left:1.04px;top:17.54px;font-size:11.80px;line-height:11.80px;color:#14143a;transform:scaleX(0.8600);transform-origin:0 0;">ЗП</div></div><div class="b" style="left:284.62px;top:172px;width:18.24px;height:27px;overflow:hidden"><div class="t" style="left:1.04px;top:4.64px;font-size:11.80px;line-height:11.80px;color:#14143a;transform:scaleX(0.8600);transform-origin:0 0;">ГИ-</div><div class="t" style="left:1.04px;top:17.54px;font-size:11.80px;line-height:11.80px;color:#14143a;transform:scaleX(0.8600);transform-origin:0 0;">ЗУ</div></div><div class="b" style="left:304.16px;top:172px;width:18.24px;height:27px;overflow:hidden"><div class="t" style="left:0.20px;top:4.64px;font-size:11.80px;line-height:11.80px;color:#14143a;transform:scaleX(0.8600);transform-origin:0 0;">ПсЛ</div><div class="t" style="left:0.20px;top:17.54px;font-size:11.80px;line-height:11.80px;color:#14143a;transform:scaleX(0.8600);transform-origin:0 0;">-</div></div><div class="b" style="left:323.70px;top:172px;width:18.24px;height:27px;overflow:hidden"><div class="t" style="left:0.20px;top:4.64px;font-size:11.80px;line-height:11.80px;color:#14143a;transform:scaleX(0.8600);transform-origin:0 0;">ЕтП</div><div class="t" style="left:0.20px;top:17.54px;font-size:11.80px;line-height:11.80px;color:#14143a;transform:scaleX(0.8600);transform-origin:0 0;">-</div></div><div class="b" style="left:343.24px;top:172px;width:18.24px;height:27px;overflow:hidden"><div class="t" style="left:2.76px;top:4.64px;font-size:11.80px;line-height:11.80px;color:#14143a;transform:scaleX(0.8600);transform-origin:0 0;">Св</div><div class="t" style="left:2.76px;top:17.54px;font-size:11.80px;line-height:11.80px;color:#14143a;transform:scaleX(0.8600);transform-origin:0 0;">Л-</div></div><div class="b" style="left:362.78px;top:172px;width:18.24px;height:27px;overflow:hidden"><div class="t" style="left:1.72px;top:4.64px;font-size:11.80px;line-height:11.80px;color:#14143a;transform:scaleX(0.8600);transform-origin:0 0;">ИЦ</div><div class="t" style="left:1.72px;top:17.54px;font-size:11.80px;line-height:11.80px;color:#14143a;transform:scaleX(0.8600);transform-origin:0 0;">-</div></div><div class="b" style="left:382.31px;top:172px;width:18.24px;height:27px;overflow:hidden"><div class="t" style="left:2.76px;top:11.14px;font-size:11.80px;line-height:11.80px;color:#14143a;transform:scaleX(0.8600);transform-origin:0 0;">ЧК</div></div><div class="b" style="left:401.85px;top:172px;width:18.24px;height:27px;overflow:hidden"><div class="t" style="left:1.98px;top:4.64px;font-size:11.80px;line-height:11.80px;color:#14143a;transform:scaleX(0.8600);transform-origin:0 0;">Ма</div><div class="t" style="left:1.98px;top:17.54px;font-size:11.80px;line-height:11.80px;color:#14143a;transform:scaleX(0.8600);transform-origin:0 0;">т-</div></div><div class="b" style="left:421.39px;top:172px;width:18.24px;height:27px;overflow:hidden"><div class="t" style="left:0.20px;top:4.64px;font-size:11.80px;line-height:11.80px;color:#14143a;transform:scaleX(0.8600);transform-origin:0 0;">Мат</div><div class="t" style="left:0.20px;top:17.54px;font-size:11.80px;line-height:11.80px;color:#14143a;transform:scaleX(0.8600);transform-origin:0 0;">-</div></div><div class="b" style="left:440.93px;top:172px;width:18.24px;height:27px;overflow:hidden"><div class="t" style="left:2.37px;top:4.64px;font-size:11.80px;line-height:11.80px;color:#14143a;transform:scaleX(0.8600);transform-origin:0 0;">Гз-</div><div class="t" style="left:2.37px;top:17.54px;font-size:11.80px;line-height:11.80px;color:#14143a;transform:scaleX(0.8600);transform-origin:0 0;">З</div></div><div class="b" style="left:460.47px;top:172px;width:18.24px;height:27px;overflow:hidden"><div class="t" style="left:2.37px;top:4.64px;font-size:11.80px;line-height:11.80px;color:#14143a;transform:scaleX(0.8600);transform-origin:0 0;">Гз-</div><div class="t" style="left:2.37px;top:17.54px;font-size:11.80px;line-height:11.80px;color:#14143a;transform:scaleX(0.8600);transform-origin:0 0;">О</div></div><div class="b" style="left:480.00px;top:172px;width:18.24px;height:27px;overflow:hidden"><div class="t" style="left:0.20px;top:4.64px;font-size:11.80px;line-height:11.80px;color:#14143a;transform:scaleX(0.8600);transform-origin:0 0;">Физ</div><div class="t" style="left:0.20px;top:17.54px;font-size:11.80px;line-height:11.80px;color:#14143a;transform:scaleX(0.8600);transform-origin:0 0;">-</div></div><div class="b" style="left:499.54px;top:172px;width:18.24px;height:27px;overflow:hidden"><div class="t" style="left:0.20px;top:4.64px;font-size:11.80px;line-height:11.80px;color:#14143a;transform:scaleX(0.8600);transform-origin:0 0;">Физ</div><div class="t" style="left:0.20px;top:17.54px;font-size:11.80px;line-height:11.80px;color:#14143a;transform:scaleX(0.8600);transform-origin:0 0;">-</div></div><div class="b" style="left:519.08px;top:172px;width:18.24px;height:27px;overflow:hidden"><div class="t" style="left:0.20px;top:4.64px;font-size:11.80px;line-height:11.80px;color:#14143a;transform:scaleX(0.8600);transform-origin:0 0;">ОС-</div><div class="t" style="left:0.20px;top:17.54px;font-size:11.80px;line-height:11.80px;color:#14143a;transform:scaleX(0.8600);transform-origin:0 0;">ЗП</div></div><div class="b" style="left:538.62px;top:172px;width:18.24px;height:27px;overflow:hidden"><div class="t" style="left:0.20px;top:4.64px;font-size:11.80px;line-height:11.80px;color:#14143a;transform:scaleX(0.8600);transform-origin:0 0;">ОС-</div><div class="t" style="left:0.20px;top:17.54px;font-size:11.80px;line-height:11.80px;color:#14143a;transform:scaleX(0.8600);transform-origin:0 0;">ЗУ</div></div><div class="b" style="left:558.16px;top:172px;width:18.24px;height:27px;overflow:hidden"><div class="t" style="left:0.39px;top:4.64px;font-size:11.80px;line-height:11.80px;color:#14143a;transform:scaleX(0.8600);transform-origin:0 0;">ЧП-</div><div class="t" style="left:0.39px;top:17.54px;font-size:11.80px;line-height:11.80px;color:#14143a;transform:scaleX(0.8600);transform-origin:0 0;">ЗП</div></div><div class="b" style="left:577.69px;top:172px;width:18.24px;height:27px;overflow:hidden"><div class="t" style="left:0.39px;top:4.64px;font-size:11.80px;line-height:11.80px;color:#14143a;transform:scaleX(0.8600);transform-origin:0 0;">ЧП-</div><div class="t" style="left:0.39px;top:17.54px;font-size:11.80px;line-height:11.80px;color:#14143a;transform:scaleX(0.8600);transform-origin:0 0;">ЗУ</div></div><div class="b" style="left:597.23px;top:172px;width:18.24px;height:27px;overflow:hidden"><div class="t" style="left:0.20px;top:4.64px;font-size:11.80px;line-height:11.80px;color:#14143a;transform:scaleX(0.8600);transform-origin:0 0;">Био</div><div class="t" style="left:0.20px;top:17.54px;font-size:11.80px;line-height:11.80px;color:#14143a;transform:scaleX(0.8600);transform-origin:0 0;">п-</div></div><div class="b" style="left:616.77px;top:172px;width:18.24px;height:27px;overflow:hidden"><div class="t" style="left:0.20px;top:4.64px;font-size:11.80px;line-height:11.80px;color:#14143a;transform:scaleX(0.8600);transform-origin:0 0;">Био</div><div class="t" style="left:0.20px;top:17.54px;font-size:11.80px;line-height:11.80px;color:#14143a;transform:scaleX(0.8600);transform-origin:0 0;">п-</div></div><div class="b" style="left:636.31px;top:172px;width:18.24px;height:27px;overflow:hidden"><div class="t" style="left:0.20px;top:4.64px;font-size:11.80px;line-height:11.80px;color:#14143a;transform:scaleX(0.8600);transform-origin:0 0;">Био</div><div class="t" style="left:0.20px;top:17.54px;font-size:11.80px;line-height:11.80px;color:#14143a;transform:scaleX(0.8600);transform-origin:0 0;">п-</div></div><div class="b" style="left:655.85px;top:172px;width:18.24px;height:27px;overflow:hidden"><div class="t" style="left:2.88px;top:4.64px;font-size:11.80px;line-height:11.80px;color:#14143a;transform:scaleX(0.8600);transform-origin:0 0;">Хи</div><div class="t" style="left:2.88px;top:17.54px;font-size:11.80px;line-height:11.80px;color:#14143a;transform:scaleX(0.8600);transform-origin:0 0;">м-</div></div><div class="b" style="left:675.38px;top:172px;width:18.24px;height:27px;overflow:hidden"><div class="t" style="left:2.88px;top:4.64px;font-size:11.80px;line-height:11.80px;color:#14143a;transform:scaleX(0.8600);transform-origin:0 0;">Хи</div><div class="t" style="left:2.88px;top:17.54px;font-size:11.80px;line-height:11.80px;color:#14143a;transform:scaleX(0.8600);transform-origin:0 0;">м-</div></div><div class="b" style="left:694.92px;top:172px;width:18.24px;height:27px;overflow:hidden"><div class="t" style="left:0.20px;top:4.64px;font-size:11.80px;line-height:11.80px;color:#14143a;transform:scaleX(0.8600);transform-origin:0 0;">Рвб</div><div class="t" style="left:0.20px;top:17.54px;font-size:11.80px;line-height:11.80px;color:#14143a;transform:scaleX(0.8600);transform-origin:0 0;">-Д</div></div><div class="b" style="left:714.46px;top:172px;width:18.24px;height:27px;overflow:hidden"><div class="t" style="left:1.29px;top:4.64px;font-size:11.80px;line-height:11.80px;color:#14143a;transform:scaleX(0.8600);transform-origin:0 0;">Хп-</div><div class="t" style="left:1.29px;top:17.54px;font-size:11.80px;line-height:11.80px;color:#14143a;transform:scaleX(0.8600);transform-origin:0 0;">Р</div></div><div class="b" style="left:734.00px;top:172px;width:18.24px;height:27px;overflow:hidden"><div class="t" style="left:1.29px;top:4.64px;font-size:11.80px;line-height:11.80px;color:#14143a;transform:scaleX(0.8600);transform-origin:0 0;">Хп-</div><div class="t" style="left:1.29px;top:17.54px;font-size:11.80px;line-height:11.80px;color:#14143a;transform:scaleX(0.8600);transform-origin:0 0;">З</div></div><div class="b" style="left:753.54px;top:172px;width:18.24px;height:27px;overflow:hidden"><div class="t" style="left:0.86px;top:4.64px;font-size:11.80px;line-height:11.80px;color:#14143a;transform:scaleX(0.8600);transform-origin:0 0;">Мз-</div><div class="t" style="left:0.86px;top:17.54px;font-size:11.80px;line-height:11.80px;color:#14143a;transform:scaleX(0.8600);transform-origin:0 0;">ЗП</div></div><div class="t" style="left:8.00px;top:207.94px;font-size:11.70px;line-height:11.70px;color:#14143a;transform:scaleX(1.0063);transform-origin:0 0;-webkit-text-stroke:0.05px #14143a;">2 в</div><div class="t" style="left:20.30px;top:219.46px;font-size:7.00px;line-height:7.00px;color:#606060;transform:scaleX(1.0897);transform-origin:0 0;-webkit-text-stroke:0.35px #606060;">23</div><div class="t" style="left:8.00px;top:234.73px;font-size:11.70px;line-height:11.70px;color:#14143a;transform:scaleX(0.9817);transform-origin:0 0;-webkit-text-stroke:0.05px #14143a;">3 а</div><div class="t" style="left:20.30px;top:246.26px;font-size:7.00px;line-height:7.00px;color:#606060;transform:scaleX(1.0897);transform-origin:0 0;-webkit-text-stroke:0.35px #606060;">26</div><div class="t" style="left:8.00px;top:261.53px;font-size:11.70px;line-height:11.70px;color:#14143a;transform:scaleX(0.9758);transform-origin:0 0;-webkit-text-stroke:0.05px #14143a;">3 б</div><div class="t" style="left:20.30px;top:273.05px;font-size:7.00px;line-height:7.00px;color:#606060;transform:scaleX(1.0897);transform-origin:0 0;-webkit-text-stroke:0.35px #606060;">26</div><div class="t" style="left:8.00px;top:288.32px;font-size:11.70px;line-height:11.70px;color:#14143a;transform:scaleX(1.0063);transform-origin:0 0;-webkit-text-stroke:0.05px #14143a;">3 в</div><div class="t" style="left:20.30px;top:299.85px;font-size:7.00px;line-height:7.00px;color:#606060;transform:scaleX(1.0897);transform-origin:0 0;-webkit-text-stroke:0.35px #606060;">26</div><div class="t" style="left:8.00px;top:315.12px;font-size:11.70px;line-height:11.70px;color:#14143a;transform:scaleX(0.9817);transform-origin:0 0;-webkit-text-stroke:0.05px #14143a;">4 а</div><div class="t" style="left:20.30px;top:326.64px;font-size:7.00px;line-height:7.00px;color:#606060;transform:scaleX(1.0897);transform-origin:0 0;-webkit-text-stroke:0.35px #606060;">26</div><div class="t" style="left:8.00px;top:341.91px;font-size:11.70px;line-height:11.70px;color:#14143a;transform:scaleX(0.9758);transform-origin:0 0;-webkit-text-stroke:0.05px #14143a;">4 б</div><div class="t" style="left:20.30px;top:353.44px;font-size:7.00px;line-height:7.00px;color:#606060;transform:scaleX(1.0897);transform-origin:0 0;-webkit-text-stroke:0.35px #606060;">26</div><div class="t" style="left:8.00px;top:368.71px;font-size:11.70px;line-height:11.70px;color:#14143a;transform:scaleX(0.9817);transform-origin:0 0;-webkit-text-stroke:0.05px #14143a;">5 а</div><div class="t" style="left:20.30px;top:380.23px;font-size:7.00px;line-height:7.00px;color:#606060;transform:scaleX(1.0897);transform-origin:0 0;-webkit-text-stroke:0.35px #606060;">34</div><div class="t" style="left:8.00px;top:395.50px;font-size:11.70px;line-height:11.70px;color:#14143a;transform:scaleX(0.9758);transform-origin:0 0;-webkit-text-stroke:0.05px #14143a;">5 б</div><div class="t" style="left:20.30px;top:407.03px;font-size:7.00px;line-height:7.00px;color:#606060;transform:scaleX(1.0897);transform-origin:0 0;-webkit-text-stroke:0.35px #606060;">35</div><div class="t" style="left:8.00px;top:422.30px;font-size:11.70px;line-height:11.70px;color:#14143a;transform:scaleX(1.0063);transform-origin:0 0;-webkit-text-stroke:0.05px #14143a;">5 в</div><div class="t" style="left:20.30px;top:433.82px;font-size:7.00px;line-height:7.00px;color:#606060;transform:scaleX(1.0897);transform-origin:0 0;-webkit-text-stroke:0.35px #606060;">34</div><div class="t" style="left:8.00px;top:449.09px;font-size:11.70px;line-height:11.70px;color:#14143a;transform:scaleX(0.9817);transform-origin:0 0;-webkit-text-stroke:0.05px #14143a;">6 а</div><div class="t" style="left:20.30px;top:460.62px;font-size:7.00px;line-height:7.00px;color:#606060;transform:scaleX(1.0897);transform-origin:0 0;-webkit-text-stroke:0.35px #606060;">30</div><div class="t" style="left:8.00px;top:475.89px;font-size:11.70px;line-height:11.70px;color:#14143a;transform:scaleX(0.9758);transform-origin:0 0;-webkit-text-stroke:0.05px #14143a;">6 б</div><div class="t" style="left:20.30px;top:487.41px;font-size:7.00px;line-height:7.00px;color:#606060;transform:scaleX(1.0897);transform-origin:0 0;-webkit-text-stroke:0.35px #606060;">27</div><div class="t" style="left:8.00px;top:502.68px;font-size:11.70px;line-height:11.70px;color:#14143a;transform:scaleX(1.0063);transform-origin:0 0;-webkit-text-stroke:0.05px #14143a;">6 в</div><div class="t" style="left:20.30px;top:514.21px;font-size:7.00px;line-height:7.00px;color:#606060;transform:scaleX(1.0897);transform-origin:0 0;-webkit-text-stroke:0.35px #606060;">27</div><div class="t" style="left:8.00px;top:529.48px;font-size:11.70px;line-height:11.70px;color:#14143a;transform:scaleX(0.9817);transform-origin:0 0;-webkit-text-stroke:0.05px #14143a;">7 а</div><div class="t" style="left:20.30px;top:541.00px;font-size:7.00px;line-height:7.00px;color:#606060;transform:scaleX(1.0897);transform-origin:0 0;-webkit-text-stroke:0.35px #606060;">28</div><div class="t" style="left:8.00px;top:556.27px;font-size:11.70px;line-height:11.70px;color:#14143a;transform:scaleX(0.9758);transform-origin:0 0;-webkit-text-stroke:0.05px #14143a;">7 б</div><div class="t" style="left:20.30px;top:567.80px;font-size:7.00px;line-height:7.00px;color:#606060;transform:scaleX(1.0897);transform-origin:0 0;-webkit-text-stroke:0.35px #606060;">26</div><div class="t" style="left:8.00px;top:583.07px;font-size:11.70px;line-height:11.70px;color:#14143a;transform:scaleX(0.9817);transform-origin:0 0;-webkit-text-stroke:0.05px #14143a;">8 а</div><div class="t" style="left:20.30px;top:594.59px;font-size:7.00px;line-height:7.00px;color:#606060;transform:scaleX(1.0897);transform-origin:0 0;-webkit-text-stroke:0.35px #606060;">28</div><div class="t" style="left:8.00px;top:609.86px;font-size:11.70px;line-height:11.70px;color:#14143a;transform:scaleX(0.9758);transform-origin:0 0;-webkit-text-stroke:0.05px #14143a;">8 б</div><div class="t" style="left:20.30px;top:621.38px;font-size:7.00px;line-height:7.00px;color:#606060;transform:scaleX(1.0897);transform-origin:0 0;-webkit-text-stroke:0.35px #606060;">31</div><div class="t" style="left:8.00px;top:636.66px;font-size:11.70px;line-height:11.70px;color:#14143a;transform:scaleX(0.9817);transform-origin:0 0;-webkit-text-stroke:0.05px #14143a;">9 а</div><div class="t" style="left:20.30px;top:648.18px;font-size:7.00px;line-height:7.00px;color:#606060;transform:scaleX(1.0897);transform-origin:0 0;-webkit-text-stroke:0.35px #606060;">33</div><div class="t" style="left:8.00px;top:663.45px;font-size:11.70px;line-height:11.70px;color:#14143a;transform:scaleX(0.9758);transform-origin:0 0;-webkit-text-stroke:0.05px #14143a;">9 б</div><div class="t" style="left:4.70px;top:690.25px;font-size:11.70px;line-height:11.70px;color:#14143a;transform:scaleX(0.8851);transform-origin:0 0;-webkit-text-stroke:0.05px #14143a;">10. а</div><div class="t" style="left:20.30px;top:701.77px;font-size:7.00px;line-height:7.00px;color:#606060;transform:scaleX(1.0897);transform-origin:0 0;-webkit-text-stroke:0.35px #606060;">31</div><div class="t" style="left:4.70px;top:717.04px;font-size:11.70px;line-height:11.70px;color:#14143a;transform:scaleX(0.8817);transform-origin:0 0;-webkit-text-stroke:0.05px #14143a;">10. б</div><div class="t" style="left:20.30px;top:728.57px;font-size:7.00px;line-height:7.00px;color:#606060;transform:scaleX(1.0897);transform-origin:0 0;-webkit-text-stroke:0.35px #606060;">18</div><div class="t" style="left:4.70px;top:743.84px;font-size:11.70px;line-height:11.70px;color:#14143a;transform:scaleX(0.9167);transform-origin:0 0;-webkit-text-stroke:0.05px #14143a;">11. а</div><div class="t" style="left:20.30px;top:755.36px;font-size:7.00px;line-height:7.00px;color:#606060;transform:scaleX(1.0897);transform-origin:0 0;-webkit-text-stroke:0.35px #606060;">31</div><div class="t" style="left:4.70px;top:770.63px;font-size:11.70px;line-height:11.70px;color:#14143a;transform:scaleX(0.8851);transform-origin:0 0;-webkit-text-stroke:0.05px #14143a;">12. а</div><div class="t" style="left:20.30px;top:782.16px;font-size:7.00px;line-height:7.00px;color:#606060;transform:scaleX(1.0897);transform-origin:0 0;-webkit-text-stroke:0.35px #606060;">32</div><div class="t" style="left:4.70px;top:797.43px;font-size:11.70px;line-height:11.70px;color:#14143a;transform:scaleX(0.8817);transform-origin:0 0;-webkit-text-stroke:0.05px #14143a;">12. б</div><div class="t" style="left:20.30px;top:808.95px;font-size:7.00px;line-height:7.00px;color:#606060;transform:scaleX(1.0897);transform-origin:0 0;-webkit-text-stroke:0.35px #606060;">28</div><div class="b" style="left:162px;top:298.5px;width:620px;height:555px;background:#f0f0f0;border-left:1px solid #4aa8ec;border-top:1px solid #4aa8ec;box-shadow:-1px -1px 9px rgba(0,0,0,0.28)"></div><div class="b" style="left:163px;top:299.5px;width:600px;height:29.5px;background:#fff"></div><svg class="b" style="left:170px;top:306px" width="18" height="15"><defs><linearGradient id="tg" x1="0" y1="0" x2="0" y2="1"><stop offset="0" stop-color="#4a7ac8"/><stop offset="1" stop-color="#3aa858"/></linearGradient></defs><rect x="1.5" y="1.3" width="15" height="12.3" fill="#f2f2f2" stroke="#9a9a9a" stroke-width="1"/><rect x="3" y="3" width="5" height="9" fill="url(#tg)"/><rect x="9.5" y="3" width="1.6" height="9" fill="#d8d8d8"/><rect x="13" y="3" width="3" height="9" fill="url(#tg)" opacity="0.6"/></svg><div class="t" style="left:192.80px;top:309.74px;font-size:11.80px;line-height:11.80px;color:#000;transform:scaleX(0.9674);transform-origin:0 0;-webkit-text-stroke:0.05px #000;">Часове за клас</div><svg class="b" style="left:0;top:0" width="762" height="833"><g transform="translate(173.5 333) scale(1.28)">
<path d="M0.5 24.3 C0.5 19 5 17 9.5 17 C14 17 18 19 18 24.3 Z" fill="#f3a0a6" stroke="#d8525c" stroke-width="1"/>
<path d="M3.5 13 C2.5 5 5.5 0.2 10.5 0.2 C15 0.2 17.5 4 17 12 C17 15 15 17 12 17.5 L6 17.5 C4.5 16.5 3.7 15 3.5 13Z" fill="#b8703a"/>
<ellipse cx="10.3" cy="10.8" rx="4.3" ry="5.3" fill="#f7cf80"/>
<path d="M7.6 31.3 C7.6 25.3 12.3 22.5 19.8 22.5 C27.3 22.5 32 25.3 32 31.3 Z" fill="#b6dfb6" stroke="#3a9a48" stroke-width="1"/>
<rect x="16" y="17.5" width="7" height="6" fill="#f8d690" stroke="#e0b460" stroke-width="0.5"/>
<path d="M12 12 C11 3.5 14.5 2.4 19.5 2.4 C25 2.4 27.5 4 27 12 C27 14 26.5 15.5 26 16.5 L13 16.5 C12.4 15 12 13.5 12 12Z" fill="#f2ca7c" stroke="#dcae5a" stroke-width="0.7"/>
<path d="M13.5 10.5 C13.5 7.5 15 6.8 19.5 6.8 C24 6.8 25.5 7.5 25.5 10.5 L25.5 15 C25 18.5 22.5 20.8 19.5 20.8 C16.5 20.8 14 18.5 13.5 15Z" fill="#fcdd9c" stroke="#e0b460" stroke-width="0.5"/>
</g></svg><div class="t" style="left:225.40px;top:339.19px;font-size:14.50px;line-height:14.50px;color:#000;font-weight:bold;transform:scaleX(0.9667);transform-origin:0 0;">3 в</div><div class="t" style="left:224.70px;top:364.01px;font-size:11.00px;line-height:11.00px;color:#000;transform:scaleX(0.9600);transform-origin:0 0;">3 в</div><div class="b" style="left:169px;top:378px;width:600px;height:408px;background:#fff;border:1px solid #8a8a8a;box-sizing:border-box"></div><div class="b" style="left:170px;top:380px;width:600px;height:23px;background:#f0f0f0;border-bottom:1px solid #a0a0a0"></div><div class="t" style="left:176.80px;top:386.56px;font-size:11.60px;line-height:11.60px;color:#000;transform:scaleX(0.9066);transform-origin:0 0;-webkit-text-stroke:0.1px #000;">Предмет</div><div class="t" style="left:326.50px;top:386.56px;font-size:11.60px;line-height:11.60px;color:#000;transform:scaleX(0.9578);transform-origin:0 0;-webkit-text-stroke:0.1px #000;">Учител</div><div class="t" style="left:485.80px;top:386.56px;font-size:11.60px;line-height:11.60px;color:#000;transform:scaleX(0.9651);transform-origin:0 0;-webkit-text-stroke:0.1px #000;">Клас</div><div class="t" style="left:615.80px;top:386.56px;font-size:11.60px;line-height:11.60px;color:#000;transform:scaleX(0.9074);transform-origin:0 0;-webkit-text-stroke:0.1px #000;">Брой</div><div class="t" style="left:666.10px;top:386.56px;font-size:11.60px;line-height:11.60px;color:#000;-webkit-text-stroke:0.1px #000;">Продъ...</div><div class="t" style="left:725.80px;top:386.56px;font-size:11.60px;line-height:11.60px;color:#000;transform:scaleX(0.9483);transform-origin:0 0;-webkit-text-stroke:0.1px #000;">Класни</div><div class="b" style="left:320px;top:381px;width:1px;height:22px;background:#9a9a9a"></div><div class="b" style="left:480px;top:381px;width:1px;height:22px;background:#9a9a9a"></div><div class="b" style="left:610px;top:381px;width:1px;height:22px;background:#9a9a9a"></div><div class="b" style="left:660px;top:381px;width:1px;height:22px;background:#9a9a9a"></div><div class="b" style="left:720px;top:381px;width:1px;height:22px;background:#9a9a9a"></div><svg class="b" style="left:300px;top:380px" width="20" height="22"><path d="M9.5 4.8 L13 18.3 L5.3 18.3" fill="none" stroke="#fafafa" stroke-width="1"/><path d="M5.3 18.3 L9.5 4.8" fill="none" stroke="#8a8a8a" stroke-width="0.9"/></svg><div class="b" style="left:175px;top:404.00px;width:600px;height:25.8px;background:#f3f3f3"></div><div class="b" style="left:177px;top:406.00px;width:22px;height:22px;background:#ffff00;overflow:hidden"><div class="t" style="left:0.67px;top:6.47px;font-size:12.50px;line-height:12.50px;color:#000;transform:scaleX(0.8500);transform-origin:0 0;-webkit-text-stroke:0.2px #000;">AE(I</div></div><div class="t" style="left:227.00px;top:411.26px;font-size:11.50px;line-height:11.50px;color:#000;-webkit-text-stroke:0.1px currentColor;">Английски ез...</div><div class="t" style="left:326.50px;top:411.26px;font-size:11.50px;line-height:11.50px;color:#000;transform:scaleX(0.9720);transform-origin:0 0;-webkit-text-stroke:0.1px currentColor;">Тестов Бундова</div><div class="t" style="left:487.00px;top:411.26px;font-size:11.50px;line-height:11.50px;color:#000;-webkit-text-stroke:0.1px currentColor;">3 в</div><div class="t" style="left:616.60px;top:411.26px;font-size:11.50px;line-height:11.50px;color:#000;-webkit-text-stroke:0.1px currentColor;">3</div><div class="t" style="left:668.20px;top:411.26px;font-size:11.50px;line-height:11.50px;color:#000;-webkit-text-stroke:0.1px currentColor;">1</div><div class="b" style="left:175px;top:429.80px;width:600px;height:24.8px;background:#0078d7"></div><div class="b" style="left:177px;top:431.80px;width:22px;height:22px;background:linear-gradient(#7474bc 0px,#000080 8px,#000080 22px);overflow:hidden"><div class="t" style="left:0.50px;top:6.47px;font-size:12.50px;line-height:12.50px;color:#000;transform:scaleX(0.8500);transform-origin:0 0;-webkit-text-stroke:0.2px #000;">БЕЛ</div></div><div class="t" style="left:227.00px;top:437.06px;font-size:11.50px;line-height:11.50px;color:#fff;-webkit-text-stroke:0.1px currentColor;">Български ез...</div><div class="t" style="left:326.50px;top:437.06px;font-size:11.50px;line-height:11.50px;color:#fff;transform:scaleX(0.9720);transform-origin:0 0;-webkit-text-stroke:0.1px currentColor;">Тестов Георгиева</div><div class="t" style="left:487.00px;top:437.06px;font-size:11.50px;line-height:11.50px;color:#fff;-webkit-text-stroke:0.1px currentColor;">3 в</div><div class="t" style="left:616.60px;top:437.06px;font-size:11.50px;line-height:11.50px;color:#fff;-webkit-text-stroke:0.1px currentColor;">7</div><div class="t" style="left:668.20px;top:437.06px;font-size:11.50px;line-height:11.50px;color:#fff;-webkit-text-stroke:0.1px currentColor;">1</div><div class="b" style="left:175px;top:455.60px;width:600px;height:25.8px;background:#f3f3f3"></div><div class="b" style="left:177px;top:457.60px;width:22px;height:22px;background:linear-gradient(#7474bc 0px,#000080 8px,#000080 22px);overflow:hidden"><div class="t" style="left:0.25px;top:6.47px;font-size:12.50px;line-height:12.50px;color:#000;transform:scaleX(0.8500);transform-origin:0 0;-webkit-text-stroke:0.2px #000;">ДоО</div></div><div class="t" style="left:227.00px;top:462.87px;font-size:11.50px;line-height:11.50px;color:#000;-webkit-text-stroke:0.1px currentColor;">Домашна об...</div><div class="t" style="left:326.50px;top:462.87px;font-size:11.50px;line-height:11.50px;color:#000;transform:scaleX(0.9720);transform-origin:0 0;-webkit-text-stroke:0.1px currentColor;">Тестов Георгиева</div><div class="t" style="left:487.00px;top:462.87px;font-size:11.50px;line-height:11.50px;color:#000;-webkit-text-stroke:0.1px currentColor;">3 в</div><div class="t" style="left:616.60px;top:462.87px;font-size:11.50px;line-height:11.50px;color:#000;-webkit-text-stroke:0.1px currentColor;">1</div><div class="t" style="left:668.20px;top:462.87px;font-size:11.50px;line-height:11.50px;color:#000;-webkit-text-stroke:0.1px currentColor;">1</div><div class="b" style="left:175px;top:481.40px;width:600px;height:25.8px;background:#ffffff"></div><div class="b" style="left:177px;top:483.40px;width:22px;height:22px;background:linear-gradient(#7474bc 0px,#000080 8px,#000080 22px);overflow:hidden"><div class="t" style="left:0.93px;top:6.47px;font-size:12.50px;line-height:12.50px;color:#000;transform:scaleX(0.8500);transform-origin:0 0;-webkit-text-stroke:0.2px #000;">ИзИ</div></div><div class="t" style="left:227.00px;top:488.66px;font-size:11.50px;line-height:11.50px;color:#000;-webkit-text-stroke:0.1px currentColor;">Изобразител...</div><div class="t" style="left:326.50px;top:488.66px;font-size:11.50px;line-height:11.50px;color:#000;transform:scaleX(0.9720);transform-origin:0 0;-webkit-text-stroke:0.1px currentColor;">Тестов Георгиева</div><div class="t" style="left:487.00px;top:488.66px;font-size:11.50px;line-height:11.50px;color:#000;-webkit-text-stroke:0.1px currentColor;">3 в</div><div class="t" style="left:616.60px;top:488.66px;font-size:11.50px;line-height:11.50px;color:#000;-webkit-text-stroke:0.1px currentColor;">2</div><div class="t" style="left:668.20px;top:488.66px;font-size:11.50px;line-height:11.50px;color:#000;-webkit-text-stroke:0.1px currentColor;">1</div><div class="b" style="left:175px;top:507.20px;width:600px;height:25.8px;background:#f3f3f3"></div><div class="b" style="left:177px;top:509.20px;width:22px;height:22px;background:linear-gradient(#7474bc 0px,#000080 8px,#000080 22px);overflow:hidden"><div class="t" style="left:1.22px;top:6.47px;font-size:12.50px;line-height:12.50px;color:#000;transform:scaleX(0.8500);transform-origin:0 0;-webkit-text-stroke:0.2px #000;">Мат</div></div><div class="t" style="left:227.00px;top:514.47px;font-size:11.50px;line-height:11.50px;color:#000;-webkit-text-stroke:0.1px currentColor;">Математика -...</div><div class="t" style="left:326.50px;top:514.47px;font-size:11.50px;line-height:11.50px;color:#000;transform:scaleX(0.9720);transform-origin:0 0;-webkit-text-stroke:0.1px currentColor;">Тестов Георгиева</div><div class="t" style="left:487.00px;top:514.47px;font-size:11.50px;line-height:11.50px;color:#000;-webkit-text-stroke:0.1px currentColor;">3 в</div><div class="t" style="left:616.60px;top:514.47px;font-size:11.50px;line-height:11.50px;color:#000;-webkit-text-stroke:0.1px currentColor;">4</div><div class="t" style="left:668.20px;top:514.47px;font-size:11.50px;line-height:11.50px;color:#000;-webkit-text-stroke:0.1px currentColor;">1</div><div class="b" style="left:175px;top:533.00px;width:600px;height:25.8px;background:#ffffff"></div><div class="b" style="left:177px;top:535.00px;width:22px;height:22px;background:linear-gradient(#7474bc 0px,#000080 8px,#000080 22px);overflow:hidden"><div class="t" style="left:2.37px;top:6.47px;font-size:12.50px;line-height:12.50px;color:#000;transform:scaleX(0.8500);transform-origin:0 0;-webkit-text-stroke:0.2px #000;">Мз-</div></div><div class="t" style="left:227.00px;top:540.26px;font-size:11.50px;line-height:11.50px;color:#000;-webkit-text-stroke:0.1px currentColor;">Музика - ООП</div><div class="t" style="left:326.50px;top:540.26px;font-size:11.50px;line-height:11.50px;color:#000;transform:scaleX(0.9720);transform-origin:0 0;-webkit-text-stroke:0.1px currentColor;">Тестов Георгиева</div><div class="t" style="left:487.00px;top:540.26px;font-size:11.50px;line-height:11.50px;color:#000;-webkit-text-stroke:0.1px currentColor;">3 в</div><div class="t" style="left:616.60px;top:540.26px;font-size:11.50px;line-height:11.50px;color:#000;-webkit-text-stroke:0.1px currentColor;">2</div><div class="t" style="left:668.20px;top:540.26px;font-size:11.50px;line-height:11.50px;color:#000;-webkit-text-stroke:0.1px currentColor;">1</div><div class="b" style="left:175px;top:558.80px;width:600px;height:25.8px;background:#f3f3f3"></div><div class="b" style="left:177px;top:560.80px;width:22px;height:22px;background:linear-gradient(#7474bc 0px,#000080 8px,#000080 22px);overflow:hidden"><div class="t" style="left:-0.26px;top:6.47px;font-size:12.50px;line-height:12.50px;color:#000;transform:scaleX(0.8500);transform-origin:0 0;-webkit-text-stroke:0.2px #000;">ФВС</div></div><div class="t" style="left:227.00px;top:566.06px;font-size:11.50px;line-height:11.50px;color:#000;-webkit-text-stroke:0.1px currentColor;">Физическо в...</div><div class="t" style="left:326.50px;top:566.06px;font-size:11.50px;line-height:11.50px;color:#000;transform:scaleX(0.9720);transform-origin:0 0;-webkit-text-stroke:0.1px currentColor;">Тестов Георгиева</div><div class="t" style="left:487.00px;top:566.06px;font-size:11.50px;line-height:11.50px;color:#000;-webkit-text-stroke:0.1px currentColor;">3 в</div><div class="t" style="left:616.60px;top:566.06px;font-size:11.50px;line-height:11.50px;color:#000;-webkit-text-stroke:0.1px currentColor;">3</div><div class="t" style="left:668.20px;top:566.06px;font-size:11.50px;line-height:11.50px;color:#000;-webkit-text-stroke:0.1px currentColor;">1</div><div class="b" style="left:175px;top:584.60px;width:600px;height:25.8px;background:#ffffff"></div><div class="b" style="left:177px;top:586.60px;width:22px;height:22px;background:linear-gradient(#7474bc 0px,#000080 8px,#000080 22px);overflow:hidden"><div class="t" style="left:4.37px;top:6.47px;font-size:12.50px;line-height:12.50px;color:#000;transform:scaleX(0.8500);transform-origin:0 0;-webkit-text-stroke:0.2px #000;">ЧК</div></div><div class="t" style="left:227.00px;top:591.87px;font-size:11.50px;line-height:11.50px;color:#000;-webkit-text-stroke:0.1px currentColor;">Час на класа</div><div class="t" style="left:326.50px;top:591.87px;font-size:11.50px;line-height:11.50px;color:#000;transform:scaleX(0.9720);transform-origin:0 0;-webkit-text-stroke:0.1px currentColor;">Тестов Георгиева</div><div class="t" style="left:487.00px;top:591.87px;font-size:11.50px;line-height:11.50px;color:#000;-webkit-text-stroke:0.1px currentColor;">3 в</div><div class="t" style="left:616.60px;top:591.87px;font-size:11.50px;line-height:11.50px;color:#000;-webkit-text-stroke:0.1px currentColor;">1</div><div class="t" style="left:668.20px;top:591.87px;font-size:11.50px;line-height:11.50px;color:#000;-webkit-text-stroke:0.1px currentColor;">1</div><div class="b" style="left:175px;top:610.40px;width:600px;height:25.8px;background:#f3f3f3"></div><div class="b" style="left:177px;top:612.40px;width:22px;height:22px;background:linear-gradient(#7474bc 0px,#000080 8px,#000080 22px);overflow:hidden"><div class="t" style="left:1.57px;top:6.47px;font-size:12.50px;line-height:12.50px;color:#000;transform:scaleX(0.8500);transform-origin:0 0;-webkit-text-stroke:0.2px #000;">ЧО-</div></div><div class="t" style="left:227.00px;top:617.66px;font-size:11.50px;line-height:11.50px;color:#000;-webkit-text-stroke:0.1px currentColor;">Човекът и об...</div><div class="t" style="left:326.50px;top:617.66px;font-size:11.50px;line-height:11.50px;color:#000;transform:scaleX(0.9720);transform-origin:0 0;-webkit-text-stroke:0.1px currentColor;">Тестов Георгиева</div><div class="t" style="left:487.00px;top:617.66px;font-size:11.50px;line-height:11.50px;color:#000;-webkit-text-stroke:0.1px currentColor;">3 в</div><div class="t" style="left:616.60px;top:617.66px;font-size:11.50px;line-height:11.50px;color:#000;-webkit-text-stroke:0.1px currentColor;">2</div><div class="t" style="left:668.20px;top:617.66px;font-size:11.50px;line-height:11.50px;color:#000;-webkit-text-stroke:0.1px currentColor;">1</div><div class="b" style="left:175px;top:636.20px;width:600px;height:25.8px;background:#ffffff"></div><div class="b" style="left:177px;top:638.20px;width:22px;height:22px;background:linear-gradient(#7474bc 0px,#000080 8px,#000080 22px);overflow:hidden"><div class="t" style="left:1.86px;top:6.47px;font-size:12.50px;line-height:12.50px;color:#000;transform:scaleX(0.8500);transform-origin:0 0;-webkit-text-stroke:0.2px #000;">ЧП-</div></div><div class="t" style="left:227.00px;top:643.47px;font-size:11.50px;line-height:11.50px;color:#000;-webkit-text-stroke:0.1px currentColor;">Човекът и пр...</div><div class="t" style="left:326.50px;top:643.47px;font-size:11.50px;line-height:11.50px;color:#000;transform:scaleX(0.9720);transform-origin:0 0;-webkit-text-stroke:0.1px currentColor;">Тестов Георгиева</div><div class="t" style="left:487.00px;top:643.47px;font-size:11.50px;line-height:11.50px;color:#000;-webkit-text-stroke:0.1px currentColor;">3 в</div><div class="t" style="left:616.60px;top:643.47px;font-size:11.50px;line-height:11.50px;color:#000;-webkit-text-stroke:0.1px currentColor;">1</div><div class="t" style="left:668.20px;top:643.47px;font-size:11.50px;line-height:11.50px;color:#000;-webkit-text-stroke:0.1px currentColor;">1</div><svg class="b" style="left:0;top:0" width="762" height="833"><g transform="translate(729 407.8)">
<path d="M1.6 6.3 V12 H10 V6.3" fill="#fff" stroke="#000" stroke-width="1.2"/>
<path d="M5.8 4 L2.8 9 H8.8 Z" fill="#ffff70"/>
<path d="M0.3 7.4 L5.6 1.4 L10.9 7.4" fill="none" stroke="#000" stroke-width="1.1"/>
<path d="M0.2 6.4 L5.6 0.3 L10.8 6.4" fill="none" stroke="#f2c418" stroke-width="1.5"/>
<rect x="7.5" y="0.3" width="1.7" height="3" fill="#e00000" stroke="#000" stroke-width="0.5"/>
<rect x="4.3" y="8.2" width="2.4" height="3.5" fill="#e08a00"/>
</g><g transform="translate(729 433.6)">
<path d="M1.6 6.3 V12 H10 V6.3" fill="#fff" stroke="#000" stroke-width="1.2"/>
<path d="M5.8 4 L2.8 9 H8.8 Z" fill="#ffff70"/>
<path d="M0.3 7.4 L5.6 1.4 L10.9 7.4" fill="none" stroke="#000" stroke-width="1.1"/>
<path d="M0.2 6.4 L5.6 0.3 L10.8 6.4" fill="none" stroke="#f2c418" stroke-width="1.5"/>
<rect x="7.5" y="0.3" width="1.7" height="3" fill="#e00000" stroke="#000" stroke-width="0.5"/>
<rect x="4.3" y="8.2" width="2.4" height="3.5" fill="#e08a00"/>
</g><g transform="translate(729 459.40000000000003)">
<path d="M1.6 6.3 V12 H10 V6.3" fill="#fff" stroke="#000" stroke-width="1.2"/>
<path d="M5.8 4 L2.8 9 H8.8 Z" fill="#ffff70"/>
<path d="M0.3 7.4 L5.6 1.4 L10.9 7.4" fill="none" stroke="#000" stroke-width="1.1"/>
<path d="M0.2 6.4 L5.6 0.3 L10.8 6.4" fill="none" stroke="#f2c418" stroke-width="1.5"/>
<rect x="7.5" y="0.3" width="1.7" height="3" fill="#e00000" stroke="#000" stroke-width="0.5"/>
<rect x="4.3" y="8.2" width="2.4" height="3.5" fill="#e08a00"/>
</g><g transform="translate(729 485.2)">
<path d="M1.6 6.3 V12 H10 V6.3" fill="#fff" stroke="#000" stroke-width="1.2"/>
<path d="M5.8 4 L2.8 9 H8.8 Z" fill="#ffff70"/>
<path d="M0.3 7.4 L5.6 1.4 L10.9 7.4" fill="none" stroke="#000" stroke-width="1.1"/>
<path d="M0.2 6.4 L5.6 0.3 L10.8 6.4" fill="none" stroke="#f2c418" stroke-width="1.5"/>
<rect x="7.5" y="0.3" width="1.7" height="3" fill="#e00000" stroke="#000" stroke-width="0.5"/>
<rect x="4.3" y="8.2" width="2.4" height="3.5" fill="#e08a00"/>
</g><g transform="translate(729 511.0)">
<path d="M1.6 6.3 V12 H10 V6.3" fill="#fff" stroke="#000" stroke-width="1.2"/>
<path d="M5.8 4 L2.8 9 H8.8 Z" fill="#ffff70"/>
<path d="M0.3 7.4 L5.6 1.4 L10.9 7.4" fill="none" stroke="#000" stroke-width="1.1"/>
<path d="M0.2 6.4 L5.6 0.3 L10.8 6.4" fill="none" stroke="#f2c418" stroke-width="1.5"/>
<rect x="7.5" y="0.3" width="1.7" height="3" fill="#e00000" stroke="#000" stroke-width="0.5"/>
<rect x="4.3" y="8.2" width="2.4" height="3.5" fill="#e08a00"/>
</g><g transform="translate(729 536.8)">
<path d="M1.6 6.3 V12 H10 V6.3" fill="#fff" stroke="#000" stroke-width="1.2"/>
<path d="M5.8 4 L2.8 9 H8.8 Z" fill="#ffff70"/>
<path d="M0.3 7.4 L5.6 1.4 L10.9 7.4" fill="none" stroke="#000" stroke-width="1.1"/>
<path d="M0.2 6.4 L5.6 0.3 L10.8 6.4" fill="none" stroke="#f2c418" stroke-width="1.5"/>
<rect x="7.5" y="0.3" width="1.7" height="3" fill="#e00000" stroke="#000" stroke-width="0.5"/>
<rect x="4.3" y="8.2" width="2.4" height="3.5" fill="#e08a00"/>
</g><g transform="translate(729 562.5999999999999)">
<path d="M1.6 6.3 V12 H10 V6.3" fill="#fff" stroke="#000" stroke-width="1.2"/>
<path d="M5.8 4 L2.8 9 H8.8 Z" fill="#ffff70"/>
<path d="M0.3 7.4 L5.6 1.4 L10.9 7.4" fill="none" stroke="#000" stroke-width="1.1"/>
<path d="M0.2 6.4 L5.6 0.3 L10.8 6.4" fill="none" stroke="#f2c418" stroke-width="1.5"/>
<rect x="7.5" y="0.3" width="1.7" height="3" fill="#e00000" stroke="#000" stroke-width="0.5"/>
<rect x="4.3" y="8.2" width="2.4" height="3.5" fill="#e08a00"/>
</g><g transform="translate(729 588.4)">
<path d="M1.6 6.3 V12 H10 V6.3" fill="#fff" stroke="#000" stroke-width="1.2"/>
<path d="M5.8 4 L2.8 9 H8.8 Z" fill="#ffff70"/>
<path d="M0.3 7.4 L5.6 1.4 L10.9 7.4" fill="none" stroke="#000" stroke-width="1.1"/>
<path d="M0.2 6.4 L5.6 0.3 L10.8 6.4" fill="none" stroke="#f2c418" stroke-width="1.5"/>
<rect x="7.5" y="0.3" width="1.7" height="3" fill="#e00000" stroke="#000" stroke-width="0.5"/>
<rect x="4.3" y="8.2" width="2.4" height="3.5" fill="#e08a00"/>
</g><g transform="translate(729 614.1999999999999)">
<path d="M1.6 6.3 V12 H10 V6.3" fill="#fff" stroke="#000" stroke-width="1.2"/>
<path d="M5.8 4 L2.8 9 H8.8 Z" fill="#ffff70"/>
<path d="M0.3 7.4 L5.6 1.4 L10.9 7.4" fill="none" stroke="#000" stroke-width="1.1"/>
<path d="M0.2 6.4 L5.6 0.3 L10.8 6.4" fill="none" stroke="#f2c418" stroke-width="1.5"/>
<rect x="7.5" y="0.3" width="1.7" height="3" fill="#e00000" stroke="#000" stroke-width="0.5"/>
<rect x="4.3" y="8.2" width="2.4" height="3.5" fill="#e08a00"/>
</g><g transform="translate(729 640.0)">
<path d="M1.6 6.3 V12 H10 V6.3" fill="#fff" stroke="#000" stroke-width="1.2"/>
<path d="M5.8 4 L2.8 9 H8.8 Z" fill="#ffff70"/>
<path d="M0.3 7.4 L5.6 1.4 L10.9 7.4" fill="none" stroke="#000" stroke-width="1.1"/>
<path d="M0.2 6.4 L5.6 0.3 L10.8 6.4" fill="none" stroke="#f2c418" stroke-width="1.5"/>
<rect x="7.5" y="0.3" width="1.7" height="3" fill="#e00000" stroke="#000" stroke-width="0.5"/>
<rect x="4.3" y="8.2" width="2.4" height="3.5" fill="#e08a00"/>
</g></svg><div class="b" style="left:168px;top:426px;width:595px;height:47px;border:7px solid #ec1c24;box-sizing:border-box"></div><div class="b" style="left:37.2px;top:272px;width:46.6px;height:41px;border:7px solid #ec1c24;box-sizing:border-box"></div><div class="b" style="left:170.0px;top:802px;width:89.5px;height:24.5px;background:#e1e1e1;border:2px solid #0078d7;box-sizing:border-box"></div><div class="t" style="left:194.40px;top:808.79px;font-size:11.20px;line-height:11.20px;color:#000;transform:scaleX(0.9537);transform-origin:0 0;-webkit-text-stroke:0.05px #000;">Нов час</div><div class="b" style="left:271.3px;top:802px;width:93.2px;height:24.5px;background:#e1e1e1;border:1px solid #adadad;box-sizing:border-box"></div><div class="t" style="left:272.60px;top:808.79px;font-size:11.20px;line-height:11.20px;color:#000;transform:scaleX(0.9727);transform-origin:0 0;-webkit-text-stroke:0.05px #000;">Корекция на часа</div><div class="b" style="left:374.0px;top:802px;width:90.5px;height:24.5px;background:#e1e1e1;border:1px solid #adadad;box-sizing:border-box"></div><div class="t" style="left:394.40px;top:808.79px;font-size:11.20px;line-height:11.20px;color:#000;transform:scaleX(0.9352);transform-origin:0 0;-webkit-text-stroke:0.05px #000;">Премахни</div><div class="b" style="left:566.2px;top:802px;width:90.4px;height:24.5px;background:#e1e1e1;border:1px solid #adadad;box-sizing:border-box"></div><div class="t" style="left:578.00px;top:808.79px;font-size:11.20px;line-height:11.20px;color:#000;-webkit-text-stroke:0.05px #000;">Копирай към</div><div class="b" style="left:668.0px;top:802px;width:90.0px;height:24.5px;background:#e1e1e1;border:1px solid #adadad;box-sizing:border-box"></div><div class="t" style="left:678.00px;top:808.79px;font-size:11.20px;line-height:11.20px;color:#000;-webkit-text-stroke:0.05px #000;">Добави други</div>
</body></html>
